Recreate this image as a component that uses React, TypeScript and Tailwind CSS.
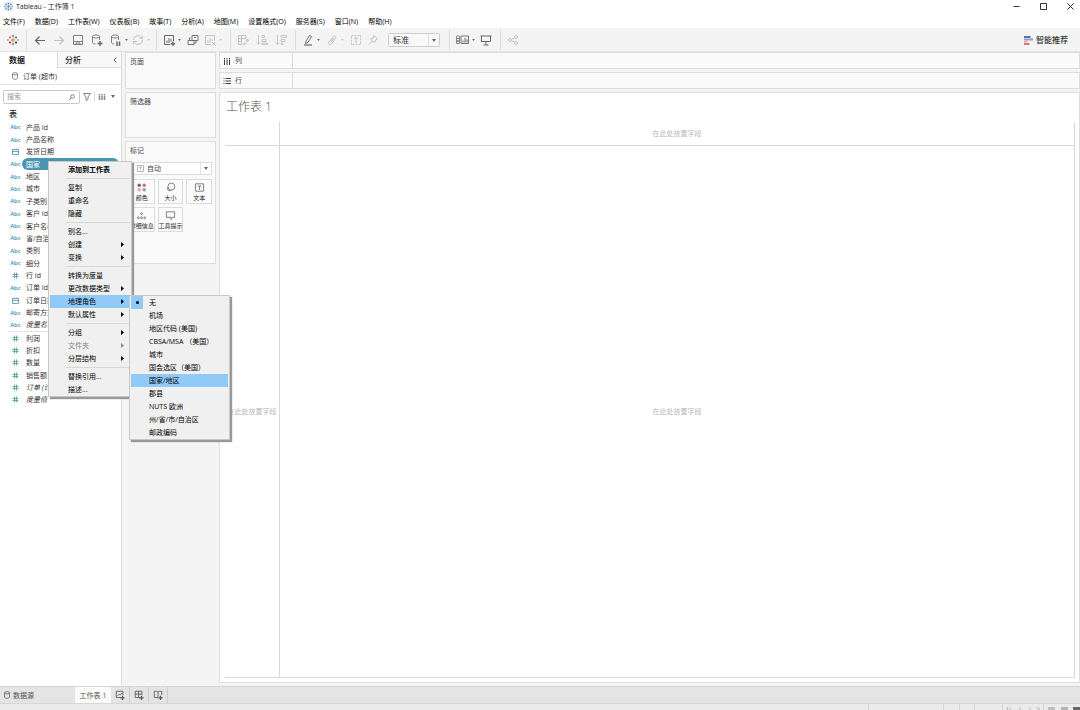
import React from "react";

const MENUS = ["文件(F)", "数据(D)", "工作表(W)", "仪表板(B)", "故事(T)", "分析(A)", "地图(M)", "设置格式(O)", "服务器(S)", "窗口(N)", "帮助(H)"];

type Field = { kind: "abc" | "date" | "num"; name: string; selected?: boolean; italic?: boolean };

const DIMENSIONS: Field[] = [
  { kind: "abc", name: "产品 Id" },
  { kind: "abc", name: "产品名称" },
  { kind: "date", name: "发货日期" },
  { kind: "abc", name: "国家", selected: true },
  { kind: "abc", name: "地区" },
  { kind: "abc", name: "城市" },
  { kind: "abc", name: "子类别" },
  { kind: "abc", name: "客户 Id" },
  { kind: "abc", name: "客户名称" },
  { kind: "abc", name: "省/自治区" },
  { kind: "abc", name: "类别" },
  { kind: "abc", name: "细分" },
  { kind: "num", name: "行 Id" },
  { kind: "abc", name: "订单 Id" },
  { kind: "date", name: "订单日期" },
  { kind: "abc", name: "邮寄方式" },
  { kind: "abc", name: "度量名称", italic: true },
];

const MEASURES: Field[] = [
  { kind: "num", name: "利润" },
  { kind: "num", name: "折扣" },
  { kind: "num", name: "数量" },
  { kind: "num", name: "销售额" },
  { kind: "num", name: "订单 (计数)", italic: true },
  { kind: "num", name: "度量值", italic: true },
];

type Item = { label: string; sub?: boolean; bold?: boolean; disabled?: boolean; active?: boolean };

const CONTEXT_GROUPS: Item[][] = [
  [{ label: "添加到工作表", bold: true }],
  [{ label: "复制" }, { label: "重命名" }, { label: "隐藏" }],
  [{ label: "别名..." }, { label: "创建", sub: true }, { label: "变换", sub: true }],
  [
    { label: "转换为度量" },
    { label: "更改数据类型", sub: true },
    { label: "地理角色", sub: true, active: true },
    { label: "默认属性", sub: true },
  ],
  [{ label: "分组", sub: true }, { label: "文件夹", sub: true, disabled: true }, { label: "分层结构", sub: true }],
  [{ label: "替换引用..." }, { label: "描述..." }],
];

const ROLES = ["无", "机场", "地区代码 (美国)", "CBSA/MSA （美国）", "城市", "国会选区（美国）", "国家/地区", "郡县", "NUTS 欧洲", "州/省/市/自治区", "邮政编码"];

function Icon({ children, className = "h-3 w-3", box = "0 0 12 12" }: { children: React.ReactNode; className?: string; box?: string }) {
  return (
    <svg viewBox={box} className={`shrink-0 ${className}`} fill="none" stroke="currentColor" strokeWidth="1" aria-hidden="true">
      {children}
    </svg>
  );
}

function Caret({ className = "h-[3px] w-1 text-[#666]" }: { className?: string }) {
  return (
    <svg viewBox="0 0 4 3" className={`shrink-0 ${className}`} aria-hidden="true">
      <path d="M0 0h4L2 3z" fill="currentColor" />
    </svg>
  );
}

function TableauMark({ className = "h-3 w-3" }: { className?: string }) {
  return (
    <Icon className={className}>
      <path d="M6 4v4M4 6h4" stroke="#e8762d" />
      <path d="M6 .8v2.4M4.9 2h2.2" stroke="#6b7fa8" />
      <path d="M6 8.8v2.4M4.9 10h2.2" stroke="#5b879b" />
      <path d="M3 2.3v2.4M1.9 3.5h2.2" stroke="#e8762d" />
      <path d="M9 2.3v2.4M7.9 3.5h2.2" stroke="#4e79a7" />
      <path d="M3 7.3v2.4M1.9 8.5h2.2" stroke="#c72035" />
      <path d="M9 7.3v2.4M7.9 8.5h2.2" stroke="#1f457e" />
      <path d="M1 5v2M.2 6h1.6M11 5v2M10.2 6h1.6" stroke="#8a95ad" strokeWidth=".8" />
    </Icon>
  );
}

function TitleMark() {
  return (
    <Icon className="h-[9px] w-[9px] bg-[#e1ecf5] text-[#4f86b5]">
      <path d="M6 4v4M4 6h4M6 .8v2.4M4.9 2h2.2M6 8.8v2.4M4.9 10h2.2M3 2.3v2.4M1.9 3.5h2.2M9 2.3v2.4M7.9 3.5h2.2M3 7.3v2.4M1.9 8.5h2.2M9 7.3v2.4M7.9 8.5h2.2M1 5v2M11 5v2" />
    </Icon>
  );
}

function Cylinder({ className = "h-2 w-2" }: { className?: string }) {
  return (
    <Icon className={className} box="0 0 8 8">
      <ellipse cx="4" cy="1.8" rx="2.5" ry="1.1" strokeWidth=".7" />
      <path d="M1.5 1.8v4.4c0 1.5 5 1.5 5 0V1.8" strokeWidth=".7" />
    </Icon>
  );
}

function Tool({ label, off, caret, children }: { label: string; off?: boolean; caret?: boolean; children: React.ReactNode }) {
  return (
    <button type="button" aria-label={label} className={`flex shrink-0 items-center gap-[3px] ${off ? "text-[#c2c2c2]" : "text-[#666]"}`}>
      <Icon>{children}</Icon>
      {caret && <span className="flex w-1"><Caret className="h-[2px] w-[3px]" /></span>}
    </button>
  );
}

function Divider() {
  return <div className="h-5 w-px shrink-0 bg-[#dcdcdc]" />;
}

function Toolbar() {
  return (
    <div className="flex h-6 items-center border-b border-[#e2e2e2] bg-[#f4f4f4] pt-px">
      <div className="flex w-[26px] shrink-0 justify-center">
        <button type="button" aria-label="开始页面" className="flex"><TableauMark /></button>
      </div>
      <Divider />
      <div className="flex w-[129px] shrink-0 items-center gap-[7px] pl-[7px]">
        <Tool label="撤消"><path d="M11 6.500H1.500M5.500 2.500l-4 4 4 4" strokeWidth="1.200" /></Tool>
        <Tool label="重做" off><path d="M1 6.500h9.500M6.500 2.500l4 4-4 4" strokeWidth="1.200" /></Tool>
        <Tool label="保存"><path d="M1.500 1.500h9v9h-9zM1.500 7.500h9M4 10.500v-1.500h4v1.500" strokeWidth=".8" /></Tool>
        <Tool label="新建数据源"><ellipse cx="5" cy="2.500" rx="3.500" ry="1.500" strokeWidth=".8" /><path d="M1.500 2.500v6c0 1 1.500 1.500 3 1.500M8.500 2.500V6" strokeWidth=".8" /><path d="M9 7v5M6.500 9.500h5" strokeWidth="1.500" /></Tool>
        <Tool label="暂停自动更新" caret><ellipse cx="5" cy="2.500" rx="3.500" ry="1.500" strokeWidth=".8" /><path d="M1.500 2.500v6c0 1 1 1.500 2.500 1.500M8.500 2.500V6" strokeWidth=".8" /><path d="M7 7.500V12M9.500 7.500V12" strokeWidth="1.500" /></Tool>
      </div>
      <div className="-ml-6 flex w-6 shrink-0 items-center">
        <Tool label="刷新" off caret><path d="M1.500 6a4.500 4.500 0 0 1 8.500-2M10.500 6a4.500 4.500 0 0 1-8.500 2" /><path d="M7.500 4.500h3V2M4.500 7.500h-3V10" /></Tool>
      </div>
      <Divider />
      <div className="flex w-[73px] shrink-0 items-center gap-[5px] pl-[6px]">
        <Tool label="新建工作表" caret><path d="M7 10.500H1.500v-9h9V7M4 9V6.500M6 9V4M8 7.500V5" /><path d="M10 7.500v4.500M7.700 9.800H12" strokeWidth="1.400" /></Tool>
        <Tool label="复制工作表"><path d="M5 1.500h6v5H5zM3.500 4H2.500v2M1 6.500h6v4H1zM7 9h2V6.500M7 3.500h2" strokeWidth=".9" /></Tool>
        <Tool label="清除工作表" off caret><path d="M6.500 10.500h-5v-9h9V7M4 9V6.500M6 9V4M8 7V5M8 8l3.500 3.500M11.500 8L8 11.500" /></Tool>
      </div>
      <Divider />
      <div className="flex w-16 shrink-0 items-center gap-[7px] pl-[6px]">
        <Tool label="交换行和列" off><path d="M1.500 1.500h3v9h-3zM4.500 1.500H9v3H1.500M1.500 7.500h3M6.500 10c2.500 0 4-1 4-4.500M9 7l1.500-2L12 7M8 8.500L6.500 10 8 11.500" /></Tool>
        <Tool label="升序排序" off><path d="M2.500 1v9.500M1 8.500l1.500 2 1.500-2M6 1.500h2.500v2H6zM6 5.500h4v2H6zM6 9h5.500v1.500H6z" strokeWidth=".9" /></Tool>
        <Tool label="降序排序" off><path d="M2.500 1v9.500M1 8.500l1.500 2 1.500-2M6 1.500h5.500v2H6zM6 5.500h4v2H6zM6 9h2v1.500H6z" strokeWidth=".9" /></Tool>
      </div>
      <Divider />
      <div className="flex w-[153px] shrink-0 items-center gap-[5px] pl-[6px]">
        <Tool label="突出显示" caret><path d="M4 7l3.500-5.500 2 1L6 8.500l-2.500 1z" strokeWidth=".9" /><path d="M2 11h8" strokeWidth="1.200" /></Tool>
        <Tool label="组成员" off caret><path d="M3 8l4.500-5.500c1-1.500 3 0 2 1.500L5.500 10c-1.500 2-4 0-2.500-2l3.500-4M5 8l3-4" /></Tool>
        <Tool label="显示标记标签" off><path d="M1.500 1.500h9v9h-9z" strokeDasharray="2 1" /><path d="M4 4h4M6 4v5" /></Tool>
        <Tool label="固定轴" off><path d="M7 1.500L10.500 5 8.500 6l-1 3L3.500 5l3-1zM5.500 7L2 10.500" /></Tool>
        <div className="relative ml-1 flex h-[14px] w-[52px] items-center rounded-xs border border-[#cfcfcf] bg-[#f8f8f8]">
          <select aria-label="适合" className="h-full w-full appearance-none bg-transparent px-1 text-[8px] leading-3 text-[#333]" defaultValue="标准"><option>标准</option></select>
          <span className="pointer-events-none absolute inset-y-0 right-0 flex w-[11px] items-center justify-center border-l border-[#dedede]"><Caret /></span>
        </div>
      </div>
      <Divider />
      <div className="flex w-[50px] shrink-0 items-center gap-[5px] pl-[6px]">
        <button type="button" aria-label="显示/隐藏卡" className="flex items-center gap-[3px] text-[#666]">
          <Icon className="h-3 w-[13px]" box="0 0 13 12"><path d="M.5 2h3v2.500h-3zM.5 4.500h3V7h-3zM.5 7h3v2.500h-3z" strokeWidth=".7" /><path d="M5 2h7.500v7.500H5z" strokeWidth=".9" /><path d="M7 8.500V6.500M9 8.500V4M11 8.500V5.500" /></Icon>
          <Caret className="h-[2px] w-[3px]" />
        </button>
        <Tool label="演示模式"><path d="M.5 2h11M1.500 2v5.500h9V2M6 7.500V11M3.500 11h5" /></Tool>
      </div>
      <Divider />
      <div className="flex pl-[6px]">
        <Tool label="共享" off><circle cx="3" cy="6" r="1.500" /><circle cx="9" cy="3" r="1.500" /><circle cx="9" cy="9" r="1.500" /><path d="M4.500 5.500L7.500 4M4.500 6.500L7.500 8" /></Tool>
      </div>
      <button type="button" className="ml-auto mr-3 flex items-center gap-[3px] text-[8px] font-medium leading-3 text-[#333]">
        <svg viewBox="0 0 9 9" className="h-[9px] w-[9px]" aria-hidden="true">
          <path d="M0 0h6.500v2H0z" fill="#7b66a0" /><path d="M0 2.500h9v2H0z" fill="#7ba7d7" /><path d="M0 5h3.500v1.500H0z" fill="#f4a582" /><path d="M0 7h5.500v2H0z" fill="#ed6f7d" />
        </svg>
        智能推荐
      </button>
    </div>
  );
}

function FieldIcon({ field, measure }: { field: Field; measure?: boolean }) {
  if (field.kind === "abc") return <span className="text-[6px] font-semibold leading-3 text-[#3f8fb5]">Abc</span>;
  const tone = measure ? "text-[#3fa67c]" : "text-[#4a8fb0]";
  return (
    <Icon box="0 0 7 7" className={`h-[7px] w-[7px] ${tone}`}>
      {field.kind === "date" ? <path d="M.5 1.500h6v5h-6zM.5 3.500h6M2 .5v1M5 .5v1" strokeWidth=".8" /> : <path d="M2.500.5v6M4.500.5v6M.5 2.500h6M.5 4.500h6" strokeWidth=".8" />}
    </Icon>
  );
}

function FieldList({ fields, measure, className }: { fields: Field[]; measure?: boolean; className: string }) {
  return (
    <ul className={`flex flex-col ${className}`}>
      {fields.map((f) => (
        <li key={f.name} className="flex min-h-0 flex-1 items-center pr-[2px]">
          <span className="flex w-[22px] shrink-0 justify-center pl-[9px]"><FieldIcon field={f} measure={measure} /></span>
          <span className={`flex h-3 min-w-0 flex-1 items-center whitespace-nowrap rounded-full pl-1 ${f.selected ? "bg-[#4996b2] text-white" : "text-[#333]"} ${f.italic ? "italic" : ""}`}>{f.name}</span>
        </li>
      ))}
    </ul>
  );
}

function DataPane() {
  return (
    <aside className="flex w-[122px] shrink-0 flex-col border-r border-[#dcdcdc] bg-white">
      <div className="flex h-4 shrink-0 text-[8px] leading-3">
        <button type="button" className="w-[57px] pl-[9px] text-left font-bold">数据</button>
        <div className="flex flex-1 items-center justify-between border-b border-l border-[#dcdcdc] bg-[#f8f8f8] pl-[7px] pr-1">
          <button type="button" className="font-medium">分析</button>
          <button type="button" aria-label="折叠" className="text-[#555]"><Icon box="0 0 4 6" className="h-[6px] w-1"><path d="M3.500.5L1 3l2.500 2.500" strokeWidth=".9" /></Icon></button>
        </div>
      </div>
      <div className="flex h-[17px] shrink-0 items-center gap-1 border-b border-[#e2e2e2] pl-[11px] text-[#666]">
        <Cylinder /><span className="text-[#333]">订单 (超市)</span>
      </div>
      <div className="flex h-[23px] shrink-0 items-center gap-[3px] pl-[3px] text-[#666]">
        <div className="flex h-[14px] w-[77px] items-center rounded-xs border border-[#c9c9c9] pl-[3px] pr-1">
          <input type="text" aria-label="搜索" placeholder="搜索" className="h-full min-w-0 flex-1 bg-transparent outline-none placeholder:text-[#999]" />
          <Icon box="0 0 6 6" className="h-[6px] w-[6px]"><circle cx="3.500" cy="2.500" r="1.800" strokeWidth=".8" /><path d="M2.200 3.800L.3 5.700" strokeWidth=".9" /></Icon>
        </div>
        <button type="button" aria-label="筛选"><Icon box="0 0 8 8" className="h-2 w-2"><path d="M.5.5h7L5 4v2.500L3 7.500V4z" strokeWidth=".8" /></Icon></button>
        <div className="h-[10px] w-px bg-[#ddd]" />
        <button type="button" aria-label="视图" className="flex items-center gap-[5px] text-[#888]">
          <Icon box="0 0 8 6" className="h-[6px] w-2"><path d="M1.500 0v6M4 0v6M6.500 0v6" strokeWidth="1.500" strokeDasharray="1.500 .5 4" /></Icon><Caret />
        </button>
      </div>
      <h2 className="shrink-0 pb-px pl-[9px] text-[8px] font-medium leading-3">表</h2>
      <FieldList fields={DIMENSIONS} className="h-[210px] shrink-0" />
      <div className="mx-2 h-px shrink-0 bg-[#e4e4e4]" />
      <FieldList fields={MEASURES} measure className="h-[74px] shrink-0" />
    </aside>
  );
}

function MarkButton({ label, children }: { label: string; children: React.ReactNode }) {
  return (
    <button type="button" className="flex h-[25px] flex-col items-center justify-between whitespace-nowrap border border-[#dcdcdc] bg-[#fbfbfb] pt-[2px] text-[6px] leading-[9px] text-[#222]">
      <Icon className="h-[11px] w-[11px] text-[#777]">{children}</Icon>
      {label}
    </button>
  );
}

function Cards() {
  return (
    <section className="flex w-[97px] shrink-0 flex-col gap-[3px] px-[3px] text-[#444]">
      <div className="h-[37px] border border-[#dedede] bg-[#fafafa] px-1 pt-[3px]">页面</div>
      <div className="h-[46px] border border-[#dedede] bg-[#fafafa] px-1 pt-[3px]">筛选器</div>
      <div className="flex h-[123px] flex-col border border-[#dedede] bg-[#fafafa] px-[3px] pt-[3px]">
        <h3 className="pl-px leading-3">标记</h3>
        <div className="relative mt-[5px] flex h-[13px] items-center border border-[#dcdcdc] bg-white">
          <select aria-label="标记类型" className="h-full w-full appearance-none bg-transparent pl-[17px] leading-[11px]" defaultValue="自动"><option>自动</option></select>
          <span className="pointer-events-none absolute inset-y-0 left-[7px] flex items-center text-[#999]"><Icon box="0 0 7 7" className="h-[7px] w-[7px]"><path d="M.5.5h6v6h-6zM2 2.200h3M3.500 2.200v3" strokeWidth=".7" /></Icon></span>
          <span className="pointer-events-none absolute inset-y-0 right-0 flex w-[11px] items-center justify-center border-l border-[#e4e4e4]"><Caret /></span>
        </div>
        <div className="mt-1 grid grid-cols-3 gap-[3px]">
          <MarkButton label="颜色">
            <g stroke="none"><circle cx="3.500" cy="3.500" r="1.900" fill="#76628f" /><circle cx="9" cy="3.500" r="1.900" fill="#ed6274" /><circle cx="3.500" cy="8.500" r="1.900" fill="#f2a277" /><circle cx="9" cy="8.500" r="1.900" fill="#76a5cf" /></g>
          </MarkButton>
          <MarkButton label="大小"><circle cx="7" cy="5" r="3.800" /><path d="M3.300 5.500a2.300 2.300 0 1 0 3.500 3.300" /></MarkButton>
          <MarkButton label="文本"><path d="M1.500 2h9v8h-9zM4 4.500h4M6 4.500v4" /></MarkButton>
          <MarkButton label="详细信息"><circle cx="6" cy="4" r="1" /><circle cx="2.500" cy="8.500" r="1" /><circle cx="6" cy="8.500" r="1" /><circle cx="9.500" cy="8.500" r="1" /></MarkButton>
          <MarkButton label="工具提示"><path d="M1.500 2h9v6H8l-1.500 2.500V8h-5z" /></MarkButton>
        </div>
      </div>
    </section>
  );
}

function Shelf({ label, children }: { label: string; children: React.ReactNode }) {
  return (
    <div className="flex h-[17px] shrink-0 border border-[#dedede] bg-[#fafafa]">
      <div className="flex w-[73px] items-center gap-1 border-r border-[#dedede] pl-[3px] text-[#444]">
        <Icon box="0 0 8 8" className="h-2 w-2">{children}</Icon>{label}
      </div>
    </div>
  );
}

function Worksheet() {
  return (
    <section className="flex min-w-0 flex-1 flex-col gap-[3px]">
      <Shelf label="列"><path d="M1.500 2.500V8M4 2.500V8M6.500 2.500V8M1.500 1v1M4 1v1M6.500 1v1" /></Shelf>
      <Shelf label="行"><path d="M2.500 1.500H8M2.500 4H8M2.500 6.500H8M.5 1.500h1M.5 4h1M.5 6.500h1" /></Shelf>
      <div className="mb-[3px] flex min-h-0 flex-1 flex-col border border-[#dedede] bg-white pb-1 pl-[5px] pr-1">
        <h1 className="h-[29px] shrink-0 pl-px pt-[6px] text-[12px] font-light leading-4 text-[#555]">工作表 1</h1>
        <div className="grid min-h-0 flex-1 grid-cols-[55px_1fr] grid-rows-[24px_1fr] border-b border-r border-[#d8d8d8] text-[#b8b8b8]">
          <div className="border-b border-r border-[#d8d8d8]" />
          <div className="flex items-center justify-center border-b border-[#d8d8d8]">在此处放置字段</div>
          <div className="flex items-center justify-center border-r border-[#d8d8d8]"><span className="whitespace-nowrap">在此处放置字段</span></div>
          <div className="flex items-center justify-center">在此处放置字段</div>
        </div>
      </div>
    </section>
  );
}

function ContextMenu() {
  return (
    <div role="menu" aria-label="字段" className="absolute left-12 top-[161px] w-[84px] border border-[#c8c8c8] bg-[#f0f0f0] px-px pt-px shadow-[2px_2px_1px_#999]">
      {CONTEXT_GROUPS.map((group, g) => (
        <React.Fragment key={g}>
          {g > 0 && <div role="separator" className="ml-4 flex h-[5px] items-center"><div className="h-px flex-1 bg-[#d8d8d8]" /></div>}
          {group.map((item) => (
            <button key={item.label} type="button" role="menuitem" disabled={item.disabled} className={`flex h-[13px] w-full items-center justify-between whitespace-nowrap pl-[18px] pr-[6px] ${item.active ? "bg-[#91c9f7]" : ""} ${item.bold ? "font-bold" : ""} ${item.disabled ? "text-[#8a8a8a]" : "text-black"}`}>
              {item.label}
              {item.sub && <svg viewBox="0 0 3 5" className="h-[5px] w-[3px]" aria-hidden="true"><path d="M0 0l3 2.500L0 5z" fill="currentColor" /></svg>}
            </button>
          ))}
        </React.Fragment>
      ))}
    </div>
  );
}

function RoleMenu() {
  return (
    <div role="menu" aria-label="地理角色" className="absolute left-[129px] top-[295px] w-[101px] border border-[#c8c8c8] bg-[#f0f0f0] px-px shadow-[2px_2px_1px_#999]">
      {ROLES.map((role, i) => (
        <button key={role} type="button" role="menuitemradio" aria-checked={i === 0} className={`flex h-[13px] w-full items-center whitespace-nowrap text-black ${role === "国家/地区" ? "bg-[#91c9f7]" : ""}`}>
          <span className={`mr-[6px] flex h-[13px] w-3 shrink-0 items-center justify-center ${i === 0 ? "bg-[#91c9f7]" : ""}`}>
            {i === 0 && <span className="h-[3px] w-[3px] rounded-full bg-black" />}
          </span>
          {role}
        </button>
      ))}
    </div>
  );
}

function BottomTabs() {
  return (
    <nav className="flex h-[18px] shrink-0 items-stretch border-y border-[#d6d6d6] bg-[#e4e4e4] text-[#555]">
      <button type="button" className="flex w-[75px] items-center gap-[2px] pl-[3px]"><Cylinder />数据源</button>
      <button type="button" className="w-[36px] whitespace-nowrap bg-[#fafafa] text-center">工作表 1</button>
      <button type="button" aria-label="新建工作表" className="flex w-[19px] items-center justify-center border-r border-[#cfcfcf]"><Icon className="h-[10px] w-[10px]"><path d="M7 9H1.500V1.500h8V6M3 7l2-2 1.500 1L8.500 3.500" /><path d="M9 7v5M6.500 9.500h5" strokeWidth="1.500" /></Icon></button>
      <button type="button" aria-label="新建仪表板" className="flex w-[19px] items-center justify-center border-r border-[#cfcfcf]"><Icon className="h-[10px] w-[10px]"><path d="M7 9H1.500V1.500h8V6M5.500 1.500V9M1.500 5h8" /><path d="M9 7v5M6.500 9.500h5" strokeWidth="1.500" /></Icon></button>
      <button type="button" aria-label="新建故事" className="flex w-[19px] items-center justify-center border-r border-[#cfcfcf]"><Icon className="h-[10px] w-[10px]"><path d="M6 9.500L4.500 9h-3V1.500h3L6 2.500l1.500-1h3V6M6 2.500v7" /><path d="M9 7v5M6.500 9.500h5" strokeWidth="1.500" /></Icon></button>
    </nav>
  );
}

function StatusBar() {
  return (
    <footer className="flex h-[6px] shrink-0 justify-end overflow-hidden bg-[#ebebeb] text-[#bbb]">
      <div className="w-[75px] border-l border-[#d4d4d4]" />
      <div className="w-4 border-l border-[#d4d4d4]" />
      <div className="w-[15px] border-l border-[#d4d4d4]" />
      <div className="w-7 border-l border-[#d4d4d4]" />
      <div className="flex w-[41px] items-end justify-around border-l border-[#d4d4d4] px-[2px]">
        <Icon box="0 0 34 3" className="h-[3px] w-[34px]"><path d="M1.500 0v3M5 0L3.500 3M15 0l-1.500 3M23 0l1.500 3M31 0l1.500 3M34 0v3" /></Icon>
      </div>
      <div className="flex w-[37px] items-end justify-between border-l border-[#d4d4d4] pl-1">
        <div className="h-[3px] w-[7px] bg-[#c0c0c0]" />
        <div className="h-[3px] w-[7px] bg-[#b4b4b4]" />
        <div className="h-[3px] w-[7px] bg-[#666]" />
      </div>
    </footer>
  );
}

export default function App() {
  return (
    <div lang="zh-CN" className="relative flex h-screen flex-col overflow-hidden bg-[#f4f4f4] font-['Open_Sans','Noto_Sans_CJK_SC',sans-serif] text-[7px] leading-[11px] text-[#222]">
      <header className="shrink-0 bg-white">
        <div className="flex h-[13px] items-center gap-[3px] pl-1 pr-[6px]">
          <TitleMark />
          <span>Tableau - 工作簿 1</span>
          <div className="ml-auto flex items-center gap-5 text-[#333]">
            <button type="button" aria-label="最小化"><Icon box="0 0 7 7" className="h-[7px] w-[7px]"><path d="M.5 3.500h6" /></Icon></button>
            <button type="button" aria-label="最大化"><Icon box="0 0 7 7" className="h-[7px] w-[7px]"><path d="M.5.5h6v6h-6z" /></Icon></button>
            <button type="button" aria-label="关闭"><Icon box="0 0 7 7" className="h-[7px] w-[7px]"><path d="M.5.5l6 6M6.500.5l-6 6" /></Icon></button>
          </div>
        </div>
        <nav className="flex h-[15px] items-center gap-[10px] whitespace-nowrap pl-[3px] pt-[2px] text-black">
          {MENUS.map((m) => (
            <button key={m} type="button">{m}</button>
          ))}
        </nav>
      </header>
      <Toolbar />
      <main className="flex min-h-0 flex-1">
        <DataPane />
        <Cards />
        <Worksheet />
      </main>
      <BottomTabs />
      <StatusBar />
      <ContextMenu />
      <RoleMenu />
    </div>
  );
}
